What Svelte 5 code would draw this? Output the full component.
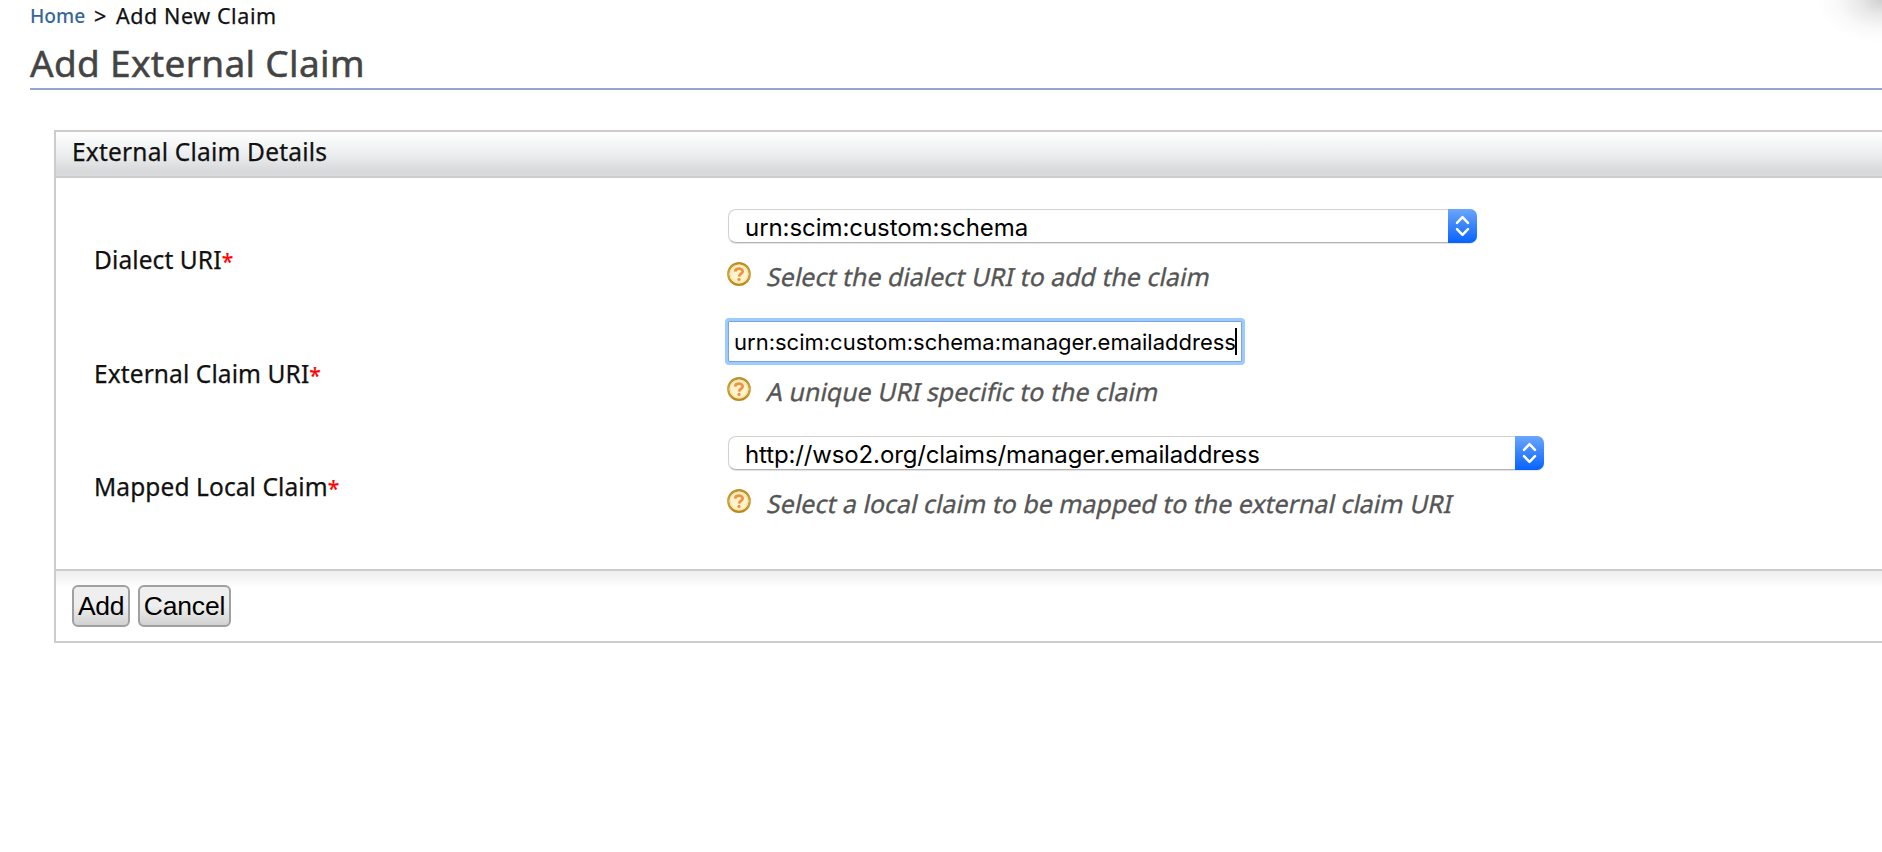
<script>
  const fields = [
    { kind: 'select', label: 'Dialect URI', value: 'urn:scim:custom:schema', hint: 'Select the dialect URI to add the claim' },
    { kind: 'input', label: 'External Claim URI', value: 'urn:scim:custom:schema:manager.emailaddress', hint: 'A unique URI specific to the claim' },
    { kind: 'select', label: 'Mapped Local Claim', value: 'http://wso2.org/claims/manager.emailaddress', hint: 'Select a local claim to be mapped to the external claim URI', wide: true }
  ];
</script>

<div class="page">
  <div class="corner"></div>
  <nav><span class="home">Home</span><span class="sep">&gt;</span><span class="crumb">Add New Claim</span></nav>
  <h1>Add External Claim</h1>
  <section class="panel">
    <h2>External Claim Details</h2>
    <div class="body">
      {#each fields as f}
        <div class="row {f.kind}-row">
          <div class="label">{f.label}<span class="req">*</span></div>
          <div class="cell">
            {#if f.kind === 'select'}
              <div class="select" class:wide={f.wide}>
                <span class="value">{f.value}</span>
                <span class="arrows">
                  <svg width="29" height="34" viewBox="0 0 29 34" fill="none" stroke="#fff" stroke-width="2.5" stroke-linecap="round" stroke-linejoin="round">
                    <path d="M9 13.8 14.5 8.2 20 13.8M9 20.2 14.5 25.8 20 20.2" />
                  </svg>
                </span>
              </div>
            {:else}
              <div class="input"><span class="typed">{f.value}</span><span class="caret"></span></div>
            {/if}
            <div class="hint">
              <svg class="help" width="24" height="24" viewBox="0 0 24 24">
                <defs>
                  <linearGradient id="ring" x1="0" y1="0" x2="0" y2="1">
                    <stop offset="0" stop-color="#b98f2b" /><stop offset=".5" stop-color="#cba84c" /><stop offset="1" stop-color="#b88a1c" />
                  </linearGradient>
                </defs>
                <circle cx="12" cy="12" r="10.7" fill="#fff3cf" stroke="url(#ring)" stroke-width="2.5" />
                <circle cx="12" cy="12" r="8.8" fill="none" stroke="#fbe6a4" stroke-width="1.4" />
                <path d="M8.2 9.6C8.3 5.6 15.8 5.6 15.7 9.5C15.6 12 12.2 11.9 12.1 14.6" fill="none" stroke="#ed9340" stroke-width="2.7" />
                <circle cx="12" cy="17.4" r="1.6" fill="#ed9340" />
              </svg>
              <span class="hint-text">{f.hint}</span>
            </div>
          </div>
        </div>
      {/each}
    </div>
    <div class="actions"><button class="add">Add</button><button class="cancel">Cancel</button></div>
  </section>
</div>

<style>
  :global(body) { background: #fff; overflow: hidden; }
  .page { position: relative; box-sizing: border-box; height: 852px; padding-left: 30px; font-family: 'Noto Sans', sans-serif; color: #111; overflow: hidden; }
  .corner { position: absolute; top: 0; right: 0; width: 70px; height: 43px; background: radial-gradient(ellipse 66px 43px at 100% 0, rgba(0,0,0,.19), rgba(0,0,0,.09) 33%, rgba(0,0,0,.025) 68%, transparent); }
  nav { display: flex; height: 38px; line-height: 30px; font-size: 21.5px; white-space: nowrap; }
  .home { width: 64px; padding-top: 1px; font-size: 19.2px; font-weight: 500; color: #386698; }
  .sep { width: 22px; padding-top: 1px; }
  .crumb { padding-top: 1px; letter-spacing: .58px; }
  .sep, .crumb, h2, .label { -webkit-text-stroke: .25px currentColor; }
  h1 { margin: 0; height: 50px; line-height: 50px; font-size: 37px; font-weight: 400; letter-spacing: .32px; color: #444; border-bottom: 2px solid #94a6cb; -webkit-text-stroke: .5px currentColor; }
  .panel { margin: 40px 0 0 24px; border: 2px solid #ccc; border-right: 0; }
  h2 { margin: 0; height: 44px; padding-left: 16px; line-height: 40px; font-size: 24.5px; font-weight: 400; letter-spacing: .2px; background: linear-gradient(#fff, #eceeef 50%, #d7d9db 88%, #d8dadb); border-bottom: 2px solid #ccc; }
  .body { box-sizing: border-box; height: 391px; padding: 31px 0 0 38px; }
  .row { display: grid; grid-template-columns: 634px 1fr; height: 109px; }
  .input-row { height: 118px; }
  .label { padding-top: 31px; line-height: 40px; font-size: 24.5px; letter-spacing: .1px; white-space: nowrap; }
  .input-row .label { padding-top: 36px; }
  .req { color: #f00; font-size: 21px; line-height: 1; }
  .select { display: flex; box-sizing: border-box; width: 749px; height: 34px; border: 1px solid #d2d2d2; border-bottom-color: #b4b4b4; border-radius: 8px; box-shadow: 0 1px 1px rgba(0,0,0,.12); }
  .wide { width: 816px; }
  .value { flex: 1; padding-left: 16px; font: 24px/35px Inter, sans-serif; letter-spacing: -.06px; color: #000; white-space: nowrap; }
  .wide .value { letter-spacing: -.13px; }
  .arrows { width: 29px; height: 34px; margin: -1px; border-radius: 0 7px 7px 0; background: linear-gradient(#6ba6fb, #3d87fb 45%, #0763fd); }
  .arrows svg { display: block; }
  .input { display: flex; align-items: center; box-sizing: border-box; width: 520px; height: 47px; margin-left: -3px; padding-left: 6px; border: 3px solid #9dcbfe; border-radius: 4px; box-shadow: inset 0 0 0 1px #76a5e0; font: 22px/40px Inter, sans-serif; color: #000; white-space: nowrap; }
  .typed { width: 501px; overflow: hidden; }
  .caret { flex: none; width: 2px; height: 27px; background: #000; }
  .hint { display: flex; height: 40px; margin: 13px 0 0 -1px; }
  .input-row .hint { margin-top: 6px; }
  .help { flex: none; margin: 6px 17px 0 0; }
  .hint-text { line-height: 40px; font-size: 24.8px; letter-spacing: .08px; font-variant-ligatures: common-ligatures; color: #555; white-space: nowrap; transform: skewX(-12deg); -webkit-text-stroke: .35px currentColor; }
  .actions { display: flex; gap: 8px; height: 72px; box-sizing: border-box; padding: 14px 0 0 16px; border-top: 2px solid #ccc; background: linear-gradient(#eee, #fff 17px); }
  button { box-sizing: border-box; height: 42px; padding: 0; border: 2px solid #a0a0a0; border-radius: 6px; background: linear-gradient(#efefef, #eee 50%, #d2d2d2); font: 26.5px/36px 'Liberation Sans', Arial, sans-serif; color: #000; }
  .add { width: 58px; letter-spacing: -.4px; }
  .cancel { width: 93px; letter-spacing: -.2px; }
</style>
